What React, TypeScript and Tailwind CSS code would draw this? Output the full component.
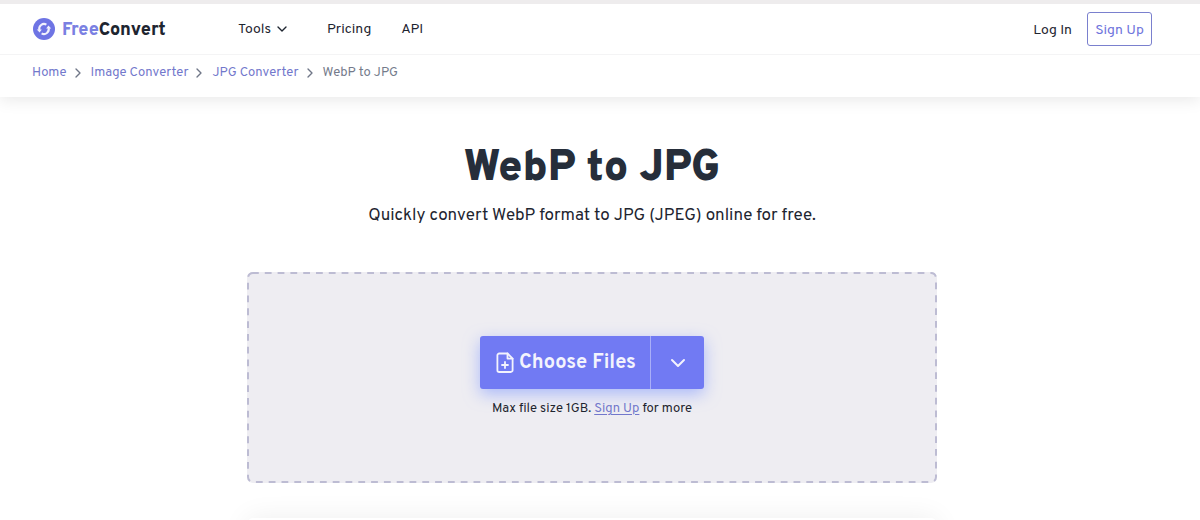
import { ChevronDown, ChevronRight } from "lucide-react";

const crumbs = ["Home", "Image Converter", "JPG Converter"];

function Logo() {
  return (
    <svg viewBox="0 0 22 22" className="size-[22px]" aria-hidden="true">
      <circle cx="11" cy="11" r="11" fill="#6e74e4" />
      <g fill="none" stroke="#f1f1fd" strokeWidth="2.1">
        <path d="M6.4 12A4.8 4.8 0 0 1 13.4 6.6" />
        <path d="M15.6 10A4.8 4.8 0 0 1 8.6 15.4" />
      </g>
      <path d="M3.8 11.4H8.8L6.6 14.6z" fill="#f1f1fd" />
      <path d="M18.2 10.6H13.2L15.4 7.4z" fill="#f1f1fd" />
    </svg>
  );
}

function FilePlusIcon() {
  return (
    <svg
      viewBox="0 0 18 22"
      className="h-[22px] w-[18px]"
      fill="none"
      stroke="currentColor"
      strokeWidth="1.8"
      strokeLinecap="round"
      strokeLinejoin="round"
      aria-hidden="true"
    >
      <path d="M11.5 1.5H3.2A1.8 1.8 0 0 0 1.4 3.3V18.2A1.8 1.8 0 0 0 3.2 20H14.8A1.8 1.8 0 0 0 16.6 18.2V6.6Z" />
      <path d="M11.5 1.5V6.6H16.6M9 10V16M6 13H12" />
    </svg>
  );
}

export default function App() {
  return (
    <div className="h-screen overflow-hidden border-t-4 border-[#eeeced] bg-white font-['Overpass','Roboto',sans-serif] text-[#1e2530]">
      <header className="shadow-[0_2px_16px_rgba(0,0,0,0.10)]">
        <div className="flex h-[51px] items-center border-b border-[#f4f4f5] pr-12 pl-[33px]">
          <a href="#" className="flex w-[205px] items-center gap-[7px] text-[18px] font-extrabold">
            <Logo />
            <span className="pt-[2px]">
              <span className="text-[#7a80e2]">Free</span>Convert
            </span>
          </a>
          <nav className="flex items-center text-[14px]">
            <button type="button" className="flex items-center gap-[3px]">
              Tools
              <ChevronDown size={16} strokeWidth={2} />
            </button>
            <a href="#" className="ml-[37px]">Pricing</a>
            <a href="#" className="ml-[30px]">API</a>
          </nav>
          <div className="ml-auto flex items-center gap-[15px] text-[14px]">
            <a href="#" className="pt-[2px]">Log In</a>
            <a
              href="#"
              className="flex h-[34px] w-[65px] items-center justify-center rounded-[3px] border border-[#7a80ce] pt-[2px] text-[#6e74dc]"
            >
              Sign Up
            </a>
          </div>
        </div>
        <nav aria-label="Breadcrumb" className="flex h-[42px] items-start pt-2 pl-8 text-[13px] leading-5">
          {crumbs.map((crumb) => (
            <span key={crumb} className="flex items-center">
              <a href="#" className="text-[#7278cc]">{crumb}</a>
              <ChevronRight size={16} strokeWidth={2} className="mr-[5px] ml-[3px] text-[#6f7687]" />
            </span>
          ))}
          <span className="text-[#747b8b]">WebP to JPG</span>
        </nav>
      </header>

      <main className="flex flex-col items-center pt-[46px] pr-4">
        <h1 className="text-[43px] leading-[52px] font-black text-[#262e3a]">WebP to JPG</h1>
        <p className="mt-[9px] text-[17px] leading-6">
          Quickly convert WebP format to JPG (JPEG) online for free.
        </p>

        <section className="relative mt-11 flex h-[211px] w-full max-w-[690px] flex-col items-center rounded-md bg-[#eeedf2] pt-16">
          <svg className="pointer-events-none absolute inset-0 size-full p-px" overflow="visible" aria-hidden="true">
            <rect
              width="100%"
              height="100%"
              rx="5"
              fill="none"
              stroke="#bdbcd3"
              strokeWidth="2"
              strokeDasharray="6.8 6"
              strokeDashoffset="1"
            />
          </svg>
          <div className="flex h-[53px] rounded-[3px] bg-[#717af3] text-[#f3f3fd] shadow-[0_5px_16px_rgba(125,150,255,0.6)]">
            <button
              type="button"
              className="flex w-[170px] items-center justify-center gap-[5px] pl-[2px] text-[20px] font-bold"
            >
              <FilePlusIcon />
              Choose Files
            </button>
            <button
              type="button"
              aria-label="More sources"
              className="flex w-[54px] items-center justify-center border-l border-[#a9aff8]"
            >
              <ChevronDown size={24} strokeWidth={2} />
            </button>
          </div>
          <p className="mt-[10px] text-[13px] leading-5">
            Max file size 1GB.{" "}
            <a href="#" className="text-[#7278cc] underline underline-offset-2">Sign Up</a> for more
          </p>
        </section>

        <section className="mt-[35px] h-40 w-full max-w-[690px] rounded-md bg-white shadow-[0_0_28px_rgba(0,0,0,0.07)]" />
      </main>
    </div>
  );
}
